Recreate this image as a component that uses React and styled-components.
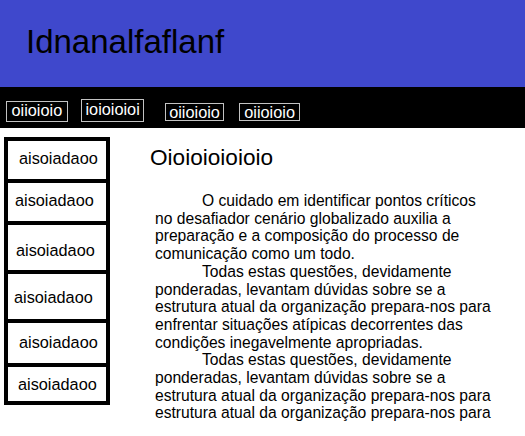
import styled, { createGlobalStyle } from 'styled-components';

const GlobalStyle = createGlobalStyle`
  html, body {
    margin: 0;
    padding: 0;
    overflow: hidden;
    background: #fff;
  }
  body {
    font-family: "Liberation Sans", Arial, sans-serif;
    color: #000;
  }
`;

const StyledHeader = styled.header`
  height: 87px;
  box-sizing: border-box;
  padding: 23px 0 0 26px;
  background: #3f48cc;
`;
const StyledTitle = styled.h1`
  margin: 0;
  font-size: 33px;
  line-height: 37.7px;
  font-weight: normal;
`;
const StyledNav = styled.nav`
  display: flex;
  align-items: flex-start;
  height: 41px;
  padding-left: 6px;
  background: #000;
`;
const StyledNavLink = styled.a`
  display: block;
  margin-top: ${(p) => p.$top}px;
  margin-left: ${(p) => p.$left}px;
  padding: ${(p) => p.$pt}px ${(p) => p.$px}px ${(p) => p.$pb}px;
  border: 1px solid #c3c3c3;
  color: #fff;
  font-size: 16.3px;
  line-height: ${(p) => p.$lh}px;
  text-decoration: none;
`;
const StyledBody = styled.div`
  display: flex;
  align-items: flex-start;
`;
const StyledSidebar = styled.ul`
  display: flex;
  flex-direction: column;
  width: 106px;
  box-sizing: border-box;
  margin: 9px 0 0 4px;
  padding: 0;
  list-style: none;
  border: 4px solid #000;
`;
const StyledItem = styled.li`
  height: ${(p) => p.$h}px;
  box-sizing: border-box;
  padding: ${(p) => p.$pt}px 0 0 ${(p) => p.$pl}px;
  border-top: ${(p) => (p.$first ? 0 : 4)}px solid #000;
  font-size: 16.3px;
  line-height: 18.7px;
  white-space: nowrap;
`;
const StyledMain = styled.main`
  margin-left: 40px;
  padding-top: 17px;
`;
const StyledHeading = styled.h2`
  margin: 0 0 21px;
  font-size: 22.6px;
  line-height: 26px;
  font-weight: normal;
`;
const StyledParagraph = styled.p`
  width: 339px;
  margin: 0 0 0 5px;
  font-size: 15.65px;
  line-height: 17.7px;
  text-indent: 47px;
`;

const links = [
  { text: 'oiioioio', top: 14, left: 0, pt: 0, pb: 3, px: 4.5, lh: 16 },
  { text: 'ioioioioi', top: 12, left: 13.6, pt: 1, pb: 3, px: 3.2, lh: 16.7 },
  { text: 'oiioioio', top: 16, left: 21, pt: 0, pb: 0, px: 3.2, lh: 16.4 },
  { text: 'oiioioio', top: 16, left: 15, pt: 0, pb: 0, px: 4.2, lh: 16.4 },
];

const items = [
  { h: 38, pt: 8, pl: 11 },
  { h: 42, pt: 8, pl: 7 },
  { h: 49, pt: 15.7, pl: 8 },
  { h: 49, pt: 14, pl: 6 },
  { h: 44, pt: 9.7, pl: 11 },
  { h: 38, pt: 8, pl: 10 },
];

export default function App() {
  return (
    <>
      <GlobalStyle />
      <StyledHeader>
        <StyledTitle>Idnanalfaflanf</StyledTitle>
      </StyledHeader>
      <StyledNav>
        {links.map((link, i) => (
          <StyledNavLink
            key={i}
            href="#"
            $top={link.top}
            $left={link.left}
            $pt={link.pt}
            $pb={link.pb}
            $px={link.px}
            $lh={link.lh}
          >
            {link.text}
          </StyledNavLink>
        ))}
      </StyledNav>
      <StyledBody>
        <StyledSidebar>
          {items.map((item, i) => (
            <StyledItem key={i} $first={i === 0} $h={item.h} $pt={item.pt} $pl={item.pl}>
              aisoiadaoo
            </StyledItem>
          ))}
        </StyledSidebar>
        <StyledMain>
          <StyledHeading>Oioioioioioio</StyledHeading>
          <StyledParagraph>
            O cuidado em identificar pontos críticos no desafiador cenário globalizado auxilia a
            preparação e a composição do processo de comunicação como um todo.
          </StyledParagraph>
          <StyledParagraph>
            Todas estas questões, devidamente ponderadas, levantam dúvidas sobre se a estrutura
            atual da organização prepara-nos para enfrentar situações atípicas decorrentes das
            condições inegavelmente apropriadas.
          </StyledParagraph>
          <StyledParagraph>
            Todas estas questões, devidamente ponderadas, levantam dúvidas sobre se a estrutura
            atual da organização prepara-nos para estrutura atual da organização prepara-nos para
          </StyledParagraph>
        </StyledMain>
      </StyledBody>
    </>
  );
}
